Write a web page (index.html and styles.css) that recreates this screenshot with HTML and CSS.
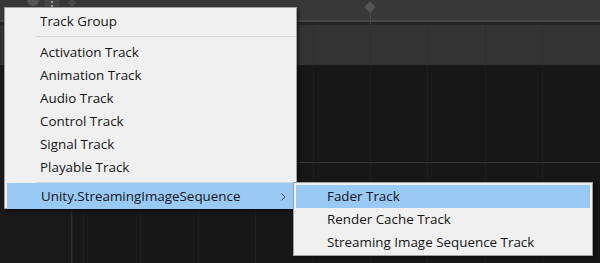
FILE: index.html
```html
<!DOCTYPE html>
<html lang="en">
<head>
  <meta charset="UTF-8">
  <meta name="viewport" content="width=device-width, initial-scale=1.0">
  <title>Timeline - Add Track</title>
  <link rel="stylesheet" href="styles.css">
</head>
<body>

  <div class="editor">
    <!-- Barra superior del editor -->
    <div class="toolbar">
      <span class="tool-circle"></span>
      <span class="tool-more"></span>
      <span class="tool-marker"></span>
      <span class="keyframe"></span>
    </div>
    <div class="ruler-line"></div>
    <div class="header-row"></div>
    <div class="tracks">
      <div class="track-list"></div>
      <div class="timeline">
        <div class="track-row"></div>
      </div>
    </div>
  </div>

  <!-- Menú contextual principal -->
  <ul class="menu main-menu">
    <li class="item">Track Group</li>
    <li class="separator"></li>
    <li class="item">Activation Track</li>
    <li class="item">Animation Track</li>
    <li class="item">Audio Track</li>
    <li class="item">Control Track</li>
    <li class="item">Signal Track</li>
    <li class="item">Playable Track</li>
    <li class="separator"></li>
    <li class="item submenu-item active">
      Unity.StreamingImageSequence
      <svg class="arrow" width="5" height="8" viewBox="0 0 5 8">
        <path d="M0.5 0.5 L4 4 L0.5 7.5" fill="none" stroke="#505050" stroke-width="1"/>
      </svg>
    </li>
  </ul>

  <!-- Submenú -->
  <ul class="menu sub-menu">
    <li class="item active">Fader Track</li>
    <li class="item">Render Cache Track</li>
    <li class="item">Streaming Image Sequence Track</li>
  </ul>

</body>
</html>
```

FILE: styles.css
```css
* {
  margin: 0;
  padding: 0;
  box-sizing: border-box;
}
body {
  font-family: 'Open Sans', 'Noto Sans', sans-serif;
  background-color: #171717;
  width: 600px;
  height: 263px;
  overflow: hidden;
  position: relative;
}
.editor {
  display: flex;
  flex-direction: column;
  height: 263px;
}
.toolbar {
  height: 20px;
  background-color: #383838;
  position: relative;
}
.tool-circle {
  position: absolute;
  left: 27px;
  top: -6px;
  width: 12px;
  height: 12px;
  border-radius: 50%;
  background-color: #555;
}
.tool-more {
  position: absolute;
  left: 45px;
  top: 0;
  width: 14px;
  height: 20px;
  background-color: #444;
  background-image: radial-gradient(circle, #a0a0a0 1px, transparent 1.5px);
  background-size: 14px 4px;
  background-repeat: repeat-y;
  background-position: 0 0;
}
.tool-marker {
  position: absolute;
  left: 69px;
  top: 0;
  width: 6px;
  height: 6px;
  background-color: #4a4a4a;
  transform: rotate(45deg);
}
.keyframe {
  position: absolute;
  left: 366px;
  top: 3px;
  width: 8px;
  height: 8px;
  background-color: #555;
  transform: rotate(45deg);
}
.keyframe::after {
  content: '';
  position: absolute;
  left: 7px;
  top: 7px;
  width: 1px;
  height: 13px;
  background-color: #4d4d4d;
  transform: rotate(-45deg);
  transform-origin: 0 0;
}
.ruler-line {
  height: 5px;
  background-color: #262626;
  border-top: 2px solid #464646;
}
.header-row {
  height: 40px;
  background-color: #333;
  background-image: repeating-linear-gradient(to right, #2e2e2e 0 1px, transparent 1px 57.4px);
  background-position: 83px 0;
}
.tracks {
  flex: 1;
  display: flex;
}
.track-list {
  width: 72px;
  border-right: 1px solid #2b2b2b;
  background-color: #191919;
}
.timeline {
  flex: 1;
  background-image: repeating-linear-gradient(to right, #1f1f1f 0 1px, transparent 1px 57.4px);
  background-position: 11px 0;
}
.track-row {
  height: 98px;
  border-bottom: 1px solid #3a3430;
}
.menu {
  position: absolute;
  list-style: none;
  background-color: #f0f0f0;
  border: 1px solid #a0a0a0;
  box-shadow: 2px 2px 3px rgba(0, 0, 0, 0.45);
  font-size: 13.4px;
  color: #151515;
}
.main-menu {
  left: 4px;
  top: 7px;
  width: 293px;
  height: 202px;
  padding: 2px 0 0 1px;
}
.sub-menu {
  left: 293px;
  top: 182px;
  width: 300px;
  height: 74px;
  padding: 2px 2px 0 1px;
}
.item {
  height: 23px;
  line-height: 23px;
  white-space: nowrap;
}
.main-menu .item {
  padding-left: 34px;
}
.sub-menu .item {
  padding-left: 31px;
  margin-left: 1px;
}
.separator {
  height: 1px;
  margin: 3px 0 4px 30px;
  background-color: #d7d7d7;
}
.submenu-item {
  height: 26px;
  line-height: 26px;
  margin: -4px 0 0 1px;
  position: relative;
}
.active {
  background-color: #99c9f5;
}
.arrow {
  position: absolute;
  left: 274px;
  top: 10px;
}
```
